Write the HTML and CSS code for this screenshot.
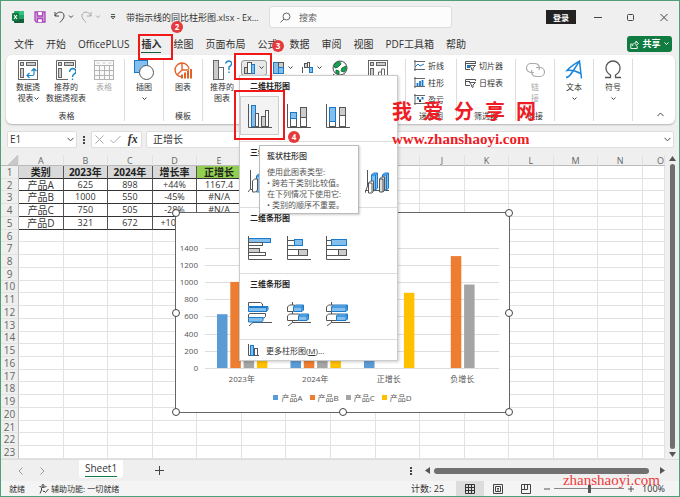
FILE: index.html
```html
<!DOCTYPE html>
<html lang="zh-CN">
<head>
    <meta charset="UTF-8">
    <title>带指示线的同比柱形图.xlsx - Excel</title>
    <link rel="stylesheet" href="styles.css">
</head>
<body>
    <div class="app">
        <header class="titlebar">
            <svg class="logo" width="12" height="12" viewBox="0 0 12 12">
                <rect x="2" width="10" height="12" rx="1" fill="#21a366"/>
                <path d="M7 0h4a1 1 0 0 1 1 1v3H7z" fill="#33c481"/>
                <path d="M2 8h10v3a1 1 0 0 1-1 1H3a1 1 0 0 1-1-1z" fill="#185c37"/>
                <rect y="2" width="7" height="8" rx="1" fill="#107c41"/>
                <path d="M2 4l3 4M5 4L2 8" stroke="#fff" stroke-width="1.1"/>
            </svg>
            <button class="icon-btn save" aria-label="保存">
                <svg width="12" height="12" viewBox="0 0 12 12" fill="none" stroke="#a846b9" stroke-width="1.3">
                    <path d="M1 1h10v10H2.500L1 9.500z" fill="#d9a8e2"/>
                    <path d="M3.500 1v4h5V1" fill="#fff"/><path d="M3.500 11V7.500h5V11" fill="#fff"/>
                </svg>
            </button>
            <button class="icon-btn undo" aria-label="撤消">
                <svg width="20" height="12" viewBox="0 0 20 12" fill="none" stroke="#444">
                    <path d="M1 1v4h4M1 5c2-5 8-5 9-1 .6 3-2 5-4 7.500"/><path d="M15 4.500l2 2 2-2"/>
                </svg>
            </button>
            <button class="icon-btn redo" aria-label="恢复">
                <svg width="20" height="12" viewBox="0 0 20 12" fill="none" stroke="#aaa">
                    <path d="M10 1v4H6M10 5C8 0 2 0 1 4c-.6 3 2 5 4 7.500"/><path d="M15 4.500l2 2 2-2"/>
                </svg>
            </button>
            <button class="icon-btn more" aria-label="自定义快速访问工具栏">
                <svg width="6" height="6" viewBox="0 0 6 6" fill="none" stroke="#555"><path d="M1 .5h4M1 2.500h4L3 5z"/></svg>
            </button>
            <span class="doc-name">带指示线的同比柱形图.xlsx - Ex...</span>
            <label class="search">
                <svg width="11" height="11" viewBox="0 0 11 11" fill="none" stroke="#666"><circle cx="6.500" cy="4.500" r="3.500"/><path d="M4 7L.5 10.500"/></svg>
                <input type="text" placeholder="搜索" aria-label="搜索">
            </label>
            <button class="login">登录</button>
            <div class="win-btns">
                <button class="icon-btn" aria-label="最小化"><svg width="8" height="8" viewBox="0 0 8 8" stroke="#444"><path d="M0 4.500h8"/></svg></button>
                <button class="icon-btn" aria-label="最大化"><svg width="8" height="8" viewBox="0 0 8 8" fill="none" stroke="#444"><rect x=".5" y="1.500" width="6" height="6" rx="1"/></svg></button>
                <button class="icon-btn" aria-label="关闭"><svg width="8" height="8" viewBox="0 0 8 8" stroke="#444"><path d="M.5 1l7 7M7.500 1l-7 7"/></svg></button>
            </div>
        </header>

        <nav class="tabs">
            <a href="#">文件</a>
            <a href="#">开始</a>
            <a href="#">OfficePLUS</a>
            <a href="#" class="active">插入</a>
            <a href="#">绘图</a>
            <a href="#">页面布局</a>
            <a href="#">公式</a>
            <a href="#">数据</a>
            <a href="#">审阅</a>
            <a href="#">视图</a>
            <a href="#">PDF工具箱</a>
            <a href="#">帮助</a>
            <button class="share">
                <svg width="9" height="9" viewBox="0 0 9 9" fill="none" stroke="#fff" stroke-width=".9"><path d="M2.500 4H.8v4.500h6.400V6M2.500 6c0-2 1.500-3 3.500-3V1l2.500 2.500L6 5.500V4.200"/></svg>
                共享
                <svg width="5" height="4" viewBox="0 0 5 4" fill="none" stroke="#fff"><path d="M.5.5l2 2 2-2"/></svg>
            </button>
        </nav>

        <section class="ribbon">
            <div class="group g-tables">
                <div class="tools">
                    <button class="tool">
                        <svg width="20" height="20" viewBox="0 0 20 20" fill="none" stroke="#666">
                            <rect x=".5" y=".5" width="19" height="19" fill="#fff"/><rect x="2.500" y="2.500" width="3" height="3" fill="#ccc"/><rect x="8.500" y="2.500" width="9" height="3" fill="#ccc"/><rect x="2.500" y="8.500" width="3" height="9" fill="#ccc"/>
                            <path d="M9 15.500h5.500q1.500 0 1.500-1.500V8.500M11.500 13L9 15.500l2.500 2.500M13.500 11L16 8.500l2.500 2.500" stroke="#1a86c9" stroke-width="1.200"/>
                        </svg>
                        <span>数据透<br>视表<svg class="chev" width="5" height="4" viewBox="0 0 5 4"><path d="M.5.5l2 2 2-2"/></svg></span>
                    </button>
                    <button class="tool">
                        <svg width="20" height="20" viewBox="0 0 20 20" fill="none" stroke="#666">
                            <path d="M12 19.500H.5V.5h19V8"/><rect x="2.500" y="2.500" width="3" height="3" fill="#ccc"/><rect x="8.500" y="2.500" width="9" height="3" fill="#ccc"/><rect x="2.500" y="8.500" width="3" height="9" fill="#ccc"/>
                            <path d="M13.500 12q.5-3.500 3.500-3.500 3 .2 3 3 0 1.500-2 2.700-1.500 1-1.500 2.800M16.500 18.500V20" stroke="#1a86c9" stroke-width="1.400"/>
                        </svg>
                        <span>推荐的<br>数据透视表</span>
                    </button>
                    <button class="tool" disabled>
                        <svg width="20" height="20" viewBox="0 0 20 20" fill="none" stroke="#b5b5b5">
                            <rect x=".5" y=".5" width="19" height="19" fill="#fafafa"/><path d="M.5 5.500h19M.5 10.500h19M.5 15.500h19M5.500 5v15M10.500 5v15M15.500 5v15M3 2.500l1 1 1-1M9 2.500l1 1 1-1M15 2.500l1 1 1-1"/>
                        </svg>
                        <span>表格</span>
                    </button>
                </div>
                <div class="group-name">表格</div>
            </div>
            <div class="group g-narrow">
                <div class="tools">
                    <button class="tool">
                        <svg width="20" height="20" viewBox="0 0 20 20"><rect x=".5" y=".5" width="13" height="12" fill="#83beec" stroke="#1979ca"/><circle cx="12.500" cy="12.500" r="7" fill="#fff" stroke="#555"/></svg>
                        <span>插图<br><svg class="chev" width="5" height="4" viewBox="0 0 5 4"><path d="M.5.5l2 2 2-2"/></svg></span>
                    </button>
                </div>
            </div>
            <div class="group g-narrow">
                <div class="tools">
                    <button class="tool">
                        <svg width="20" height="20" viewBox="0 0 20 20" fill="none" stroke="#e0622b" stroke-width="1.400"><path d="M9 17A7 7 0 1 1 16 9M9 3v7h7M9 10l-5 5"/><path d="M9 18.500v-4M12 18.500v-6M15 18.500V11M18 18.500V9" stroke-width="2"/></svg>
                        <span>图表</span>
                    </button>
                </div>
                <div class="group-name">模板</div>
            </div>
            <div class="group g-charts">
                <div class="tools">
                    <button class="tool">
                        <svg width="20" height="20" viewBox="0 0 20 20" fill="none" stroke="#666"><rect x="1.500" y=".5" width="5" height="19" fill="#ccc"/><rect x="6.500" y="7.500" width="5" height="12" fill="#fff"/><path d="M13.500 3.500Q14.500 1 17 1q3 .3 2.500 3Q19 6 17 7v3M17 11.500V13" stroke="#1a86c9" stroke-width="1.400"/></svg>
                        <span>推荐的<br>图表</span>
                    </button>
                    <div class="chart-picks">
                        <button class="pick open" aria-label="插入柱形图或条形图">
                            <svg width="12" height="12" viewBox="0 0 12 12" stroke="#555"><rect x=".5" y="5.500" width="3" height="6" fill="#ccc"/><rect x="3.500" y=".5" width="4" height="11" fill="#fff"/><rect x="7.500" y="2.500" width="3" height="9" fill="#83beec" stroke="#1979ca"/></svg>
                            <svg class="chev" width="5" height="4" viewBox="0 0 5 4"><path d="M.5.5l2 2 2-2"/></svg>
                        </button>
                        <button class="pick" aria-label="插入层次结构图表">
                            <svg width="12" height="12" viewBox="0 0 12 12" stroke="#555"><rect x=".5" y=".5" width="5" height="11" fill="#83beec" stroke="#1979ca"/><rect x="5.500" y=".5" width="5" height="5" fill="#ccc"/><rect x="5.500" y="5.500" width="5" height="6" fill="#83beec" stroke="#1979ca"/></svg>
                            <svg class="chev" width="5" height="4" viewBox="0 0 5 4"><path d="M.5.5l2 2 2-2"/></svg>
                        </button>
                        <button class="pick" aria-label="插入瀑布图">
                            <svg width="12" height="12" viewBox="0 0 12 12" stroke="#555"><path d="M.5 11V5M10.500 6v5"/><rect x="2.500" y="1.500" width="3" height="4" fill="#ccc"/><rect x="5.500" y=".5" width="2" height="5" fill="#fff"/><rect x="7.500" y="5.500" width="3" height="5" fill="#83beec" stroke="#1979ca"/></svg>
                            <svg class="chev" width="5" height="4" viewBox="0 0 5 4"><path d="M.5.5l2 2 2-2"/></svg>
                        </button>
                    </div>
                    <button class="tool">
                        <svg width="20" height="20" viewBox="0 0 20 20" fill="none" stroke="#444"><circle cx="10" cy="8" r="7" fill="#fff"/><path d="M6 3q4-3 5 1L8 7 5 8 4 5zM12 8l4-2q1 4-2 6l-3-1zM6 10l3 1v3l-3-1z" fill="#1e9e55" stroke="#107c41"/><path d="M3 14q5 5 12 1"/></svg>
                        <span>地图</span>
                    </button>
                    <button class="tool">
                        <svg width="20" height="20" viewBox="0 0 20 20" fill="none" stroke="#666"><rect x=".5" y=".5" width="19" height="19" fill="#fff"/><rect x="2.500" y="2.500" width="3" height="3" fill="#ccc"/><rect x="8.500" y="2.500" width="9" height="3" fill="#ccc"/><rect x="2.500" y="8.500" width="3" height="9" fill="#ccc"/><path d="M10.500 18v-6h3v6M13.500 18V9h3v9"/></svg>
                        <span>数据透视图</span>
                    </button>
                </div>
                <div class="group-name">图表</div>
            </div>
            <div class="group g-spark">
                <div class="rows">
                    <button class="row-tool"><svg width="11" height="11" viewBox="0 0 11 11" fill="none" stroke="#666"><path d="M1 0v11M0 1.500h11M0 9.500h11"/><path d="M1 7l3-3 2 2 4-2" stroke="#1979ca"/></svg>折线</button>
                    <button class="row-tool"><svg width="11" height="11" viewBox="0 0 11 11" fill="none" stroke="#666"><path d="M1 0v11M0 1.500h11M0 9.500h11"/><path d="M3.500 9V6M6 9V4M8.500 9V3" stroke="#1979ca" stroke-width="1.800"/></svg>柱形</button>
                    <button class="row-tool"><svg width="11" height="11" viewBox="0 0 11 11" fill="none" stroke="#666"><path d="M1 0v11M0 1.500h11M0 9.500h11"/><path d="M3 3h2v2.500H3zM7.500 3h2v2.500h-2z" fill="#1979ca" stroke="none"/><path d="M5 5.500h2V8H5z" fill="#333" stroke="none"/></svg>盈亏</button>
                </div>
                <div class="group-name">迷你图</div>
            </div>
            <div class="group g-filter">
                <div class="rows">
                    <button class="row-tool"><svg width="11" height="11" viewBox="0 0 11 11" fill="none" stroke="#555"><path d="M5 9.500H.5v-8h10V4M1 3.500h9"/><path d="M2 5h3v3H2z" fill="#1979ca" stroke="none"/><path d="M4.500 5.500h6L8 8v2.500L6.500 9.500V8z" fill="#fff"/></svg>切片器</button>
                    <button class="row-tool"><svg width="11" height="11" viewBox="0 0 11 11" fill="none" stroke="#555"><path d="M5 8.500H.5v-6h10V4M1 4.500h4"/><path d="M4.500 5.500h6L8 8v2.500L6.500 9.500V8z" fill="#fff"/></svg>日程表</button>
                </div>
                <div class="group-name">筛选器</div>
            </div>
            <div class="group g-narrow">
                <div class="tools">
                    <button class="tool" disabled>
                        <svg width="20" height="20" viewBox="0 0 20 20" fill="none" stroke="#aaa" stroke-width="1.200"><path d="M9 12.500H6a4.500 4.500 0 0 1 0-9h4a4.500 4.500 0 0 1 4 6.500"/><path d="M11 7.500h4a4.500 4.500 0 0 1 0 9h-4A4.500 4.500 0 0 1 7 10"/></svg>
                        <span>链<br>接</span>
                    </button>
                </div>
                <div class="group-name">链接</div>
            </div>
            <div class="group g-narrow">
                <div class="tools">
                    <button class="tool">
                        <svg width="20" height="20" viewBox="0 0 20 20" fill="none" stroke="#1a86d9" stroke-width="1.500"><path d="M2 17.500Q5 17.500 8 12.500L15.500 1.200 17.500 18.500M15.500 1.200Q7 6 3 10.500 9 9.500 16.500 13.500"/></svg>
                        <span>文本<br><svg class="chev" width="5" height="4" viewBox="0 0 5 4"><path d="M.5.5l2 2 2-2"/></svg></span>
                    </button>
                </div>
            </div>
            <div class="group g-narrow">
                <div class="tools">
                    <button class="tool">
                        <svg width="20" height="20" viewBox="0 0 20 20" fill="none" stroke="#555" stroke-width="1.300"><path d="M2 17.500h5.500V15C4 13 3 11 3 8a7 7 0 0 1 14 0c0 3-1 5-4.500 7v2.500H18"/></svg>
                        <span>符号<br><svg class="chev" width="5" height="4" viewBox="0 0 5 4"><path d="M.5.5l2 2 2-2"/></svg></span>
                    </button>
                </div>
            </div>
            <button class="icon-btn collapse" aria-label="折叠功能区"><svg width="7" height="5" viewBox="0 0 7 5" fill="none" stroke="#444"><path d="M.5 4l3-3 3 3"/></svg></button>
        </section>

        <div class="formula-bar">
            <label class="name-box">
                <input type="text" value="E1" aria-label="名称框">
                <svg width="7" height="5" viewBox="0 0 7 5" fill="none" stroke="#444"><path d="M.5.8l3 3 3-3"/></svg>
            </label>
            <span class="dots"></span>
            <div class="fx-box">
                <svg width="9" height="9" viewBox="0 0 9 9" stroke="#aaa"><path d="M.5.5l8 8M8.500.5l-8 8"/></svg>
                <svg width="11" height="9" viewBox="0 0 11 9" fill="none" stroke="#aaa"><path d="M.5 5l3 3 7-7"/></svg>
                <span class="fx">fx</span>
            </div>
            <label class="formula">
                <input type="text" value="正增长" aria-label="编辑栏">
                <svg width="7" height="5" viewBox="0 0 7 5" fill="none" stroke="#444"><path d="M.5.8l3 3 3-3"/></svg>
            </label>
        </div>

        <main class="sheet">
            <div class="grid-wrap">
                <table class="grid">
                    <colgroup>
                        <col class="col-num">
                        <col span="14">
                        <col class="col-last">
                    </colgroup>
                    <thead>
                        <tr>
                            <th class="corner"></th>
                            <th>A</th><th>B</th><th>C</th><th>D</th><th>E</th><th>F</th><th>G</th><th>H</th>
                            <th>I</th><th>J</th><th>K</th><th>L</th><th>M</th><th>N</th><th class="cut">O</th>
                        </tr>
                    </thead>
                    <tbody id="rows"></tbody>
                </table>

                <div class="chart">
                    <svg class="plot" id="plot" width="332" height="174" viewBox="0 0 332 174"></svg>
                    <ul class="legend">
                        <li class="s-a">产品A</li>
                        <li class="s-b">产品B</li>
                        <li class="s-c">产品C</li>
                        <li class="s-d">产品D</li>
                    </ul>
                    <i class="handle tl"></i><i class="handle tr"></i>
                    <i class="handle ml"></i><i class="handle mr"></i>
                    <i class="handle bl"></i><i class="handle bm"></i><i class="handle br"></i>
                </div>
            </div>
            <div class="vscroll">
                <svg width="7" height="5" viewBox="0 0 7 5"><path d="M3.500 0L7 5H0z" fill="#555"/></svg>
                <div class="thumb"></div>
                <svg width="7" height="5" viewBox="0 0 7 5"><path d="M3.500 5L7 0H0z" fill="#555"/></svg>
            </div>
        </main>

        <div class="sheet-tabs">
            <div class="sheet-nav">
                <svg width="5" height="8" viewBox="0 0 5 8" fill="none" stroke="#999"><path d="M4.500.5L1 4l3.500 3.500"/></svg>
                <svg width="5" height="8" viewBox="0 0 5 8" fill="none" stroke="#999"><path d="M.5.5L4 4 .5 7.500"/></svg>
            </div>
            <a href="#" class="sheet-tab">Sheet1</a>
            <button class="icon-btn add" aria-label="新工作表"><svg width="9" height="9" viewBox="0 0 9 9" stroke="#444"><path d="M4.500 0v9M0 4.500h9"/></svg></button>
            <span class="dots"></span>
            <div class="hscroll">
                <svg width="5" height="7" viewBox="0 0 5 7"><path d="M0 3.500L5 0v7z" fill="#555"/></svg>
                <div class="thumb"></div>
                <svg width="5" height="7" viewBox="0 0 5 7"><path d="M5 3.500L0 0v7z" fill="#555"/></svg>
            </div>
        </div>

        <footer class="status">
            <span>就绪</span>
            <span class="access">
                <svg width="10" height="10" viewBox="0 0 10 10" fill="none" stroke="#444"><circle cx="4" cy="1.500" r="1"/><path d="M.5 2.500q3.500 2 7 0M2.500 4v2L1 9.500M4 6.500L5 8M5 7l1.500 1.500L9.500 5"/></svg>
                辅助功能: 一切就绪
            </span>
            <span class="count">计数: 25</span>
            <div class="views">
                <button class="view on" aria-label="普通"><svg width="10" height="10" viewBox="0 0 10 10" fill="none" stroke="#333"><path d="M.5.5h9v9h-9zM.5 3.500h9M.5 6.500h9M3.500.5v9M6.500.5v9"/></svg></button>
                <button class="view" aria-label="页面布局"><svg width="10" height="10" viewBox="0 0 10 10" fill="none" stroke="#444"><path d="M.5.5h9v9h-9zM2.500 2.500h5v5h-5zM4 4.500h2M4 6h2"/></svg></button>
                <button class="view" aria-label="分页预览"><svg width="10" height="10" viewBox="0 0 10 10" fill="none" stroke="#444"><path d="M.5.5h9v9h-9zM3.500.5v5M6.500.5v5M.5 5.500h6"/></svg></button>
            </div>
            <div class="zoom">
                <button class="icon-btn" aria-label="缩小"><svg width="6" height="6" viewBox="0 0 6 6" stroke="#555"><path d="M0 3h6"/></svg></button>
                <input type="range" min="0" max="200" value="100" aria-label="缩放">
                <button class="icon-btn" aria-label="放大"><svg width="6" height="6" viewBox="0 0 6 6" stroke="#555"><path d="M0 3h6M3 0v6"/></svg></button>
                <span>100%</span>
            </div>
        </footer>

        <!-- Chart type gallery -->
        <div class="menu">
            <h3>二维柱形图</h3>
            <div class="gallery">
                <button class="chart-type hover" aria-label="簇状柱形图">
                    <svg width="24" height="24" viewBox="0 0 24 24" fill="#fff" stroke="#555"><path d="M.5 0v23.500H24" fill="none"/><rect x="3.500" y="1.500" width="4" height="21" fill="#83beec" stroke="#1979ca"/><rect x="7.500" y="9.500" width="3" height="13"/><rect x="13.500" y="12.500" width="4" height="10" fill="#ccc"/><rect x="17.500" y="6.500" width="3" height="16"/></svg>
                </button>
                <button class="chart-type" aria-label="堆积柱形图">
                    <svg width="24" height="24" viewBox="0 0 24 24" fill="#fff" stroke="#555"><path d="M.5 0v23.500H24" fill="none"/><rect x="3.500" y="14.500" width="6" height="8"/><rect x="3.500" y="8.500" width="6" height="6" fill="#83beec" stroke="#1979ca"/><rect x="13.500" y="12.500" width="6" height="10"/><rect x="13.500" y="3.500" width="6" height="10" fill="#ccc"/></svg>
                </button>
                <button class="chart-type" aria-label="百分比堆积柱形图">
                    <svg width="24" height="24" viewBox="0 0 24 24" fill="#fff" stroke="#555"><path d="M.5 0v23.500H24" fill="none"/><rect x="3.500" y="17.500" width="6" height="5"/><rect x="3.500" y="3.500" width="6" height="14" fill="#83beec" stroke="#1979ca"/><rect x="13.500" y="11.500" width="6" height="11"/><rect x="13.500" y="3.500" width="6" height="8" fill="#ccc"/></svg>
                </button>
            </div>
            <h3>三维柱形图</h3>
            <div class="gallery">
                <button class="chart-type" aria-label="三维簇状柱形图">
                    <svg width="24" height="24" viewBox="0 0 24 24" fill="#fff" stroke="#555"><path d="M2.500 0v19L0 22M2.500 19.500H24" fill="none"/><path d="M8.500 6l2-2h4v16l-2 2h-4zM8.500 6h4v16M12.500 6l2-2" fill="#83beec" stroke="#1979ca"/><path d="M4.500 11l2-2h3v11l-2 2h-3z"/></svg>
                </button>
                <button class="chart-type" aria-label="三维堆积柱形图">
                    <svg width="24" height="24" viewBox="0 0 24 24" fill="#fff" stroke="#555"><path d="M2.500 0v19L0 22M2.500 19.500H24" fill="none"/><path d="M5 14l2-2h4v8l-2 2H5z"/><path d="M5 8l2-2h4v6l-2 2H5z" fill="#83beec" stroke="#1979ca"/></svg>
                </button>
                <button class="chart-type" aria-label="三维百分比堆积柱形图">
                    <svg width="24" height="24" viewBox="0 0 24 24" fill="#fff" stroke="#555"><path d="M2.500 0v19L0 22M2.500 19.500H24" fill="none"/><path d="M5 16l2-2h4v6l-2 2H5z"/><path d="M5 4l2-2h4v12l-2 2H5z" fill="#83beec" stroke="#1979ca"/></svg>
                </button>
                <button class="chart-type" aria-label="三维柱形图">
                    <svg width="24" height="24" viewBox="0 0 24 24" fill="#fff" stroke="#555"><path d="M2.500 0v16L0 23M0 20.500h24" fill="none"/><path d="M6.500 5l2-2h4v15l-2 2h-4zM6.500 5h4v15M10.500 5l2-2M17.500 5l2-2h4v15l-2 2h-4zM17.500 5h4v15M21.500 5l2-2" fill="#83beec" stroke="#1979ca"/><path d="M3.500 13l2-2h3v10l-1.500 2H3.500zM3.500 13h3.500v9"/><path d="M14.500 9l2-2h3v13l-1.500 2h-3.500zM14.500 9h3.500v13" fill="#ddd"/></svg>
                </button>
            </div>
            <h3>二维条形图</h3>
            <div class="gallery">
                <button class="chart-type" aria-label="簇状条形图">
                    <svg width="24" height="24" viewBox="0 0 24 24" fill="#fff" stroke="#555"><rect x=".5" y="2.500" width="22" height="4" fill="#83beec" stroke="#1979ca"/><rect x=".5" y="6.500" width="14" height="3"/><rect x=".5" y="12.500" width="11" height="4" fill="#ccc"/><rect x=".5" y="16.500" width="17" height="3"/><path d="M.5 0v23.500H24" fill="none"/></svg>
                </button>
                <button class="chart-type" aria-label="堆积条形图">
                    <svg width="24" height="24" viewBox="0 0 24 24" fill="#fff" stroke="#555"><rect x=".5" y="4.500" width="8" height="5"/><rect x="7.500" y="3.500" width="8" height="6" fill="#83beec" stroke="#1979ca"/><rect x=".5" y="13.500" width="11" height="6"/><rect x="11.500" y="13.500" width="9" height="6" fill="#ccc"/><path d="M.5 0v23.500H24" fill="none"/></svg>
                </button>
                <button class="chart-type" aria-label="百分比堆积条形图">
                    <svg width="24" height="24" viewBox="0 0 24 24" fill="#fff" stroke="#555"><rect x=".5" y="4.500" width="5" height="5"/><rect x="5.500" y="3.500" width="15" height="6" fill="#83beec" stroke="#1979ca"/><rect x=".5" y="13.500" width="12" height="6"/><rect x="12.500" y="13.500" width="8" height="6" fill="#ccc"/><path d="M.5 0v23.500H24" fill="none"/></svg>
                </button>
            </div>
            <h3>三维条形图</h3>
            <div class="gallery">
                <button class="chart-type" aria-label="三维簇状条形图">
                    <svg width="24" height="24" viewBox="0 0 24 24" fill="#fff" stroke="#555"><path d="M1 24l4-3.500h19" fill="none"/><path d="M.5.5h12l2 1.500v2.500H.5z"/><path d="M.5 5.500l1.500-1h18v3l-1.500 2H.5zM.5 5.500h18v4M18.500 5.500l1.500-1" fill="#83beec" stroke="#1979ca"/><path d="M.5 12.500l1.500-1h15.500v3l-1.500 1.500H.5z"/><path d="M.5 16.500l1-1h13.500v3l-1.500 1.500H.5z" fill="#83beec" stroke="#1979ca"/></svg>
                </button>
                <button class="chart-type" aria-label="三维堆积条形图">
                    <svg width="24" height="24" viewBox="0 0 24 24" fill="#fff" stroke="#555"><path d="M5.500 0v20.500H24M5.500 20.500L1 24" fill="none"/><path d="M.5 5l2-2h5v5l-1.500 1.500H.5z"/><path d="M6.500 5l2-2h8v5l-1.500 1.500H6.500zM6.500 5H15v4M15 5l1.500-2" fill="#83beec" stroke="#1979ca"/><path d="M.5 14l2-2h10v5l-1.500 1.500H.5z"/><path d="M11.500 14l2-2h8v5L20 18.500h-8.500zM11.500 14H20v4M20 14l1.500-2" fill="#83beec" stroke="#1979ca"/></svg>
                </button>
                <button class="chart-type" aria-label="三维百分比堆积条形图">
                    <svg width="24" height="24" viewBox="0 0 24 24" fill="#fff" stroke="#555"><path d="M5.500 0v20.500H24M5.500 20.500L1 24" fill="none"/><path d="M.5 5l2-2h5v5l-1.500 1.500H.5z"/><path d="M5.500 5l2-2h14v5L20 9.500H5.500zM5.500 5H20v4M20 5l1.500-2" fill="#83beec" stroke="#1979ca"/><path d="M.5 14l2-2h10v5l-1.500 1.500H.5z"/><path d="M10.500 14l2-2h9v5L20 18.500h-9.500zM10.500 14H20v4M20 14l1.500-2" fill="#83beec" stroke="#1979ca"/></svg>
                </button>
            </div>
            <button class="more-charts">
                <svg width="11" height="12" viewBox="0 0 11 12" fill="#fff" stroke="#555"><path d="M.5 0v11.500H11" fill="none"/><rect x="2.500" y="1.500" width="3" height="10" fill="#83beec" stroke="#1979ca"/><rect x="6.500" y="4.500" width="3" height="7"/></svg>
                <span>更多柱形图(<u>M</u>)...</span>
            </button>
        </div>

        <div class="tooltip" role="tooltip">
            <strong>簇状柱形图</strong>
            <p>使用此图表类型:<br>• 跨若干类别比较值。<br>在下列情况下使用它:<br>• 类别的顺序不重要。</p>
        </div>

        <!-- Step marks -->
        <div class="mark mark-tab"></div>
        <div class="mark mark-pick"></div>
        <div class="mark mark-type"></div>
        <b class="step step-2">2</b>
        <b class="step step-3">3</b>
        <b class="step step-4">4</b>

        <div class="brand">
            <div class="brand-name"><span>我</span><span>爱</span><span>分</span><span>享</span><span>网</span></div>
            <div class="brand-url">www.zhanshaoyi.com</div>
        </div>
        <div class="brand-foot">zhanshaoyi.com</div>
    </div>

    <script src="script.js"></script>
</body>
</html>
```
FILE: styles.css
```css
* {
    box-sizing: border-box;
}
body {
    margin: 0;
    font-family: "Open Sans", "Noto Sans CJK SC", sans-serif;
    font-size: 8px;
    line-height: 11px;
    color: #333;
}
button, input {
    font: inherit;
    color: inherit;
    padding: 0;
    margin: 0;
    border: none;
    background: none;
}
a {
    color: inherit;
    text-decoration: none;
}
svg {
    display: block;
    flex: none;
}
.app {
    position: relative;
    display: flex;
    flex-direction: column;
    height: 100vh;
    overflow: hidden;
    border: 1px solid #4fa077;
    background-color: #efefef;
}
.icon-btn {
    display: flex;
    align-items: center;
    justify-content: center;
}

/* Title bar */
.titlebar {
    display: flex;
    align-items: center;
    height: 32px;
    padding: 0 11px;
}
.save { margin-left: 10px; }
.undo { margin-left: 8px; }
.redo { margin-left: 7px; }
.more { margin-left: 9px; }
.doc-name {
    margin-left: 10px;
    font-size: 9px;
    white-space: nowrap;
    width: 133px;
}
.search {
    display: flex;
    align-items: center;
    gap: 8px;
    flex: 1;
    max-width: 183px;
    height: 22px;
    margin-left: 10px;
    padding: 0 10px;
    border: 1px solid #ddd;
    border-radius: 3px;
    background-color: #fcfcfc;
}
.search input {
    flex: 1;
    min-width: 0;
    font-size: 9px;
}
.search input::placeholder {
    color: #666;
}
.login {
    width: 30px;
    height: 14px;
    margin-left: auto;
    background-color: #222;
    color: #fff;
    font-weight: bold;
}
.win-btns {
    display: flex;
    gap: 25px;
    margin-left: 18px;
}

/* Tabs */
.tabs {
    display: flex;
    align-items: center;
    gap: 12px;
    height: 22px;
    padding: 0 7px 0 13px;
    font-size: 10px;
    line-height: 16px;
    white-space: nowrap;
}
.tabs .active {
    font-weight: bold;
    box-shadow: 0 1px 0 #185c37;
}
.share {
    display: flex;
    align-items: center;
    justify-content: center;
    gap: 3px;
    width: 45px;
    height: 16px;
    margin-left: auto;
    border-radius: 3px;
    background-color: #107c41;
    color: #fff;
    font-size: 9px;
    font-weight: bold;
}

/* Ribbon */
.ribbon {
    display: flex;
    height: 69px;
    margin: 0 4px 0 5px;
    padding: 4px 0 3px;
    border-radius: 6px;
    background-color: #fff;
    box-shadow: 0 1px 2px rgba(0, 0, 0, 0.25);
}
.group {
    display: flex;
    flex-direction: column;
    justify-content: space-between;
    flex: none;
    padding-top: 1px;
    border-right: 1px solid #ddd;
}
.g-tables { width: 119px; padding-left: 3px; }
.g-narrow { width: 39px; }
.g-charts { width: 203px; }
.g-spark { width: 51px; }
.g-filter { width: 59px; }
.tools {
    display: flex;
}
.tool {
    display: flex;
    flex-direction: column;
    align-items: center;
    gap: 1px;
    width: 38px;
    white-space: nowrap;
}
.tool:disabled {
    color: #aaa;
}
.chev {
    display: inline-block;
    margin-left: 3px;
    fill: none;
    stroke: #444;
}
br + .chev {
    margin-left: 0;
}
.group-name {
    text-align: center;
}
.g-narrow .tools:only-child {
    margin-bottom: auto;
}
.chart-picks {
    display: flex;
    align-items: flex-start;
    gap: 3px;
    width: 80px;
}
.pick {
    display: flex;
    align-items: center;
    justify-content: center;
    width: 26px;
    height: 16px;
    flex: none;
}
.pick.open {
    border: 1px solid #999;
    border-radius: 3px;
    background-color: #e8e8e8;
}
.rows {
    display: flex;
    flex-direction: column;
    gap: 6px;
    padding-left: 8px;
}
.row-tool {
    display: flex;
    align-items: center;
    gap: 3px;
}
.collapse {
    align-self: flex-end;
    margin: 0 11px 4px auto;
}

/* Formula bar */
.formula-bar {
    display: flex;
    align-items: center;
    height: 17px;
    margin: 7px 5px 7px 6px;
    font-size: 10px;
}
.name-box, .fx-box, .formula {
    display: flex;
    align-items: center;
    height: 17px;
    border: 1px solid #ddd;
    border-radius: 2px;
    background-color: #fff;
}
.name-box {
    width: 70px;
    padding: 0 2px;
}
.name-box input, .formula input {
    flex: 1;
    min-width: 0;
}
.dots {
    width: 2px;
    height: 8px;
    background: repeating-linear-gradient(#444 0 2px, transparent 2px 3px);
}
.formula-bar .dots {
    margin: 0 6px;
}
.fx-box {
    justify-content: space-around;
    width: 51px;
}
.fx {
    font: italic bold 12px "Liberation Serif", serif;
}
.formula {
    flex: 1;
    margin-left: 4px;
    padding: 0 2px 0 6px;
}

/* Sheet */
.sheet {
    display: flex;
    flex: 1;
    min-height: 0;
}
.grid-wrap {
    position: relative;
    flex: 1;
    min-width: 0;
}
.grid {
    width: 100%;
    height: 100%;
    table-layout: fixed;
    border-collapse: separate;
    border-spacing: 0;
    background-color: #fff;
    font-size: 9px;
    line-height: 10px;
    text-align: center;
}
.col-num { width: 18px; }
.col-last { width: 22px; }
.grid th, .grid td {
    padding: 0;
    overflow: hidden;
    white-space: nowrap;
    border-right: 1px solid #e2e2e2;
    border-bottom: 1px solid #e2e2e2;
}
.grid thead th, .grid tbody th {
    background-color: #efefef;
    color: #666;
    font-weight: normal;
}
.grid thead th {
    height: 11px;
    line-height: 9px;
    border-bottom-color: #bbb;
}
.grid tbody th {
    border-right-color: #bbb;
    font-size: 10px;
}
.grid .corner {
    background: linear-gradient(135deg, #efefef 60%, #c8c8c8 60%);
}
.grid .cut {
    text-align: right;
}
.grid .cell {
    border-right-color: #555;
    border-bottom-color: #333;
}
.grid .head {
    background-color: #d9d9d9;
    font-size: 10px;
    font-weight: bold;
    color: #222;
}
.grid .head.up {
    background-color: #92d050;
}
.grid .name {
    font-size: 10px;
}

/* Embedded chart */
.chart {
    position: absolute;
    left: 174px;
    top: 57px;
    width: 335px;
    height: 201px;
    border: 1px solid #666;
    background-color: #fff;
}
.plot text {
    font-size: 8px;
    fill: #555;
}
.legend {
    display: flex;
    justify-content: center;
    gap: 7px;
    margin: 5px 0 0;
    padding: 0;
    list-style: none;
    color: #555;
}
.legend li {
    display: flex;
    align-items: center;
    gap: 3px;
}
.legend li::before {
    content: "";
    width: 5px;
    height: 5px;
    background-color: currentColor;
}
.legend .s-a::before { background-color: #5b9bd5; }
.legend .s-b::before { background-color: #ed7d31; }
.legend .s-c::before { background-color: #a5a5a5; }
.legend .s-d::before { background-color: #ffc000; }
.handle {
    position: absolute;
    width: 8px;
    height: 8px;
    margin: -4px;
    border: 1px solid #444;
    border-radius: 50%;
    background-color: #fff;
}
.tl { left: 0; top: 0; }
.tr { left: 100%; top: 0; }
.ml { left: 0; top: 50%; }
.mr { left: 100%; top: 50%; }
.bl { left: 0; top: 100%; }
.bm { left: 50%; top: 100%; }
.br { left: 100%; top: 100%; }

/* Scroll bars */
.vscroll {
    display: flex;
    flex-direction: column;
    align-items: center;
    gap: 3px;
    width: 14px;
    padding: 1px 0 2px;
}
.vscroll .thumb {
    flex: 1;
    width: 5px;
}
.thumb {
    border-radius: 3px;
    background-color: #707070;
}
.sheet-tabs {
    display: flex;
    align-items: center;
    height: 22px;
    padding-right: 14px;
    border-top: 1px solid #ddd;
}
.sheet-nav {
    display: flex;
    gap: 17px;
    padding-left: 17px;
}
.sheet-tab {
    align-self: flex-start;
    margin-left: 34px;
    padding: 1px 6px 2px;
    border-radius: 0 0 3px 3px;
    background-color: #fff;
    font-size: 10px;
    line-height: 15px;
    text-decoration: underline;
    text-decoration-color: #107c41;
    text-underline-offset: 4px;
}
.add {
    margin-left: 32px;
}
.sheet-tabs .dots {
    margin-left: auto;
    margin-right: 13px;
}
.hscroll {
    display: flex;
    align-items: center;
    gap: 4px;
    width: 240px;
}
.hscroll .thumb {
    flex: 1;
    height: 6px;
    margin-right: 7px;
}

/* Status bar */
.status {
    display: flex;
    align-items: center;
    height: 15px;
    padding: 0 14px 0 8px;
    background-color: #f4f4f4;
    white-space: nowrap;
}
.access {
    display: flex;
    align-items: center;
    gap: 2px;
    margin-left: 14px;
}
.count {
    margin-left: auto;
    font-size: 9px;
}
.views {
    display: flex;
    margin-left: 12px;
}
.view {
    display: flex;
    align-items: center;
    justify-content: center;
    width: 28px;
    height: 15px;
}
.view.on {
    background-color: #dcdcdc;
}
.zoom {
    display: flex;
    align-items: center;
    gap: 4px;
    margin-left: 4px;
    font-size: 9px;
}
.zoom span {
    margin-left: 4px;
}
.zoom input {
    appearance: none;
    width: 70px;
    height: 8px;
    background: linear-gradient(#888, #888) center / 100% 1px no-repeat;
}
.zoom input::-webkit-slider-thumb {
    appearance: none;
    width: 3px;
    height: 8px;
    background-color: #555;
}

/* Chart menu */
.menu {
    position: absolute;
    left: 238px;
    top: 74px;
    width: 159px;
    border: 1px solid #ccc;
    background-color: #fff;
    box-shadow: 1px 1px 3px rgba(0, 0, 0, 0.2);
}
.menu h3 {
    margin: 0;
    padding: 4px 10px 3px;
    font-size: 8px;
    line-height: 11px;
    color: #222;
}
.gallery {
    display: flex;
    padding: 2px 0 6px;
    border-bottom: 1px solid #ddd;
}
.chart-type {
    display: flex;
    align-items: center;
    justify-content: center;
    width: 39px;
    height: 39px;
}
.chart-type.hover {
    border: 1px solid #ccc;
    background-color: #f3f3f3;
}
.more-charts {
    display: flex;
    align-items: center;
    gap: 7px;
    width: 100%;
    height: 20px;
    padding-left: 8px;
}
.tooltip {
    position: absolute;
    left: 258px;
    top: 144px;
    width: 100px;
    padding: 4px 7px 3px;
    border: 1px solid #bbb;
    background-color: #fff;
    box-shadow: 1px 1px 2px rgba(0, 0, 0, 0.2);
    color: #555;
    white-space: nowrap;
}
.tooltip strong {
    font-weight: 500;
    color: #333;
}
.tooltip p {
    margin: 5px 0 0;
}

/* Step marks */
.mark {
    position: absolute;
    border: 2px solid #f01818;
}
.mark-tab { left: 137px; top: 33px; width: 35px; height: 26px; }
.mark-pick { left: 233px; top: 52px; width: 38px; height: 27px; }
.mark-type { left: 233px; top: 89px; width: 51px; height: 50px; }
.step {
    position: absolute;
    width: 12px;
    height: 12px;
    border-radius: 50%;
    background-color: #e5393c;
    color: #fff;
    line-height: 12px;
    text-align: center;
}
.step-2 { left: 170px; top: 20px; }
.step-3 { left: 271px; top: 39px; }
.step-4 { left: 287px; top: 130px; }

.brand {
    position: absolute;
    left: 391px;
    top: 99px;
    color: #ee1c25;
    font-weight: bold;
}
.brand-name {
    display: flex;
    gap: 11px;
    font-size: 20px;
    line-height: 24px;
}
.brand-url {
    margin-top: 6px;
    font-family: "Liberation Serif", serif;
    font-size: 15px;
    line-height: 18px;
}
.brand-foot {
    position: absolute;
    right: 19px;
    bottom: 7px;
    color: #ee3a3a;
    font-family: "Liberation Serif", serif;
    font-size: 15px;
    line-height: 18px;
}
```
FILE: script.js
```js
const data = [
    ['类别', '2023年', '2024年', '增长率', '正增长'],
    ['产品A', '625', '898', '+44%', '1167.4'],
    ['产品B', '1000', '550', '-45%', '#N/A'],
    ['产品C', '750', '505', '-28%', '#N/A'],
    ['产品D', '321', '672', '+109%', '873.6']
];

// Fill the sheet, 23 rows by 15 columns
const rows = document.getElementById('rows');
for (let r = 0; r < 23; r++) {
    const tr = rows.insertRow();
    const th = document.createElement('th');
    th.textContent = r + 1;
    tr.appendChild(th);
    for (let c = 0; c < 15; c++) {
        const td = tr.insertCell();
        if (data[r] && data[r][c]) {
            td.textContent = data[r][c];
            td.className = 'cell' + (r === 0 ? ' head' : '') + (r > 0 && c === 0 ? ' name' : '') + (r === 0 && c === 4 ? ' up' : '');
        }
    }
}

// Clustered columns
const categories = ['2023年', '2024年', '正增长', '负增长'];
const series = [
    { color: '#5b9bd5', values: [625, 898, 1167.4, 0] },
    { color: '#ed7d31', values: [1000, 550, 0, 1300] },
    { color: '#a5a5a5', values: [750, 505, 0, 970] },
    { color: '#ffc000', values: [321, 672, 873.6, 0] }
];
const left = 29;
const base = 155;
const groupWidth = 73.5;
const scale = 120.5 / 1400;

let svg = '';
for (let v = 0; v <= 1400; v += 200) {
    const y = Math.round(base - v * scale);
    svg += `<path d="M${left} ${y}.5h294" stroke="#ddd"/>`;
    svg += `<text x="22" y="${y + 3}" text-anchor="end">${v}</text>`;
}
categories.forEach((name, i) => {
    const x = left + i * groupWidth;
    series.forEach((s, j) => {
        const h = s.values[i] * scale;
        svg += `<rect x="${x + 12 + j * 13.3}" y="${base - h}" width="10.500" height="${h}" fill="${s.color}"/>`;
    });
    svg += `<text x="${x + groupWidth / 2}" y="169" text-anchor="middle">${name}</text>`;
});
document.getElementById('plot').innerHTML = svg;
```
